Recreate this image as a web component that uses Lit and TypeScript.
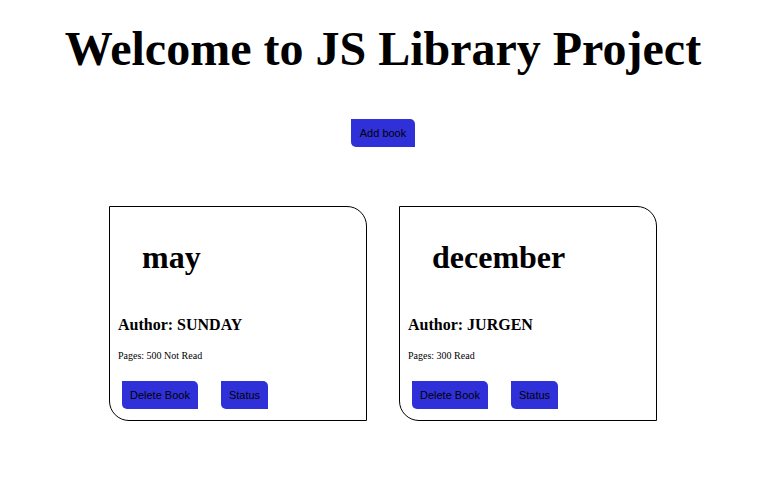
import { LitElement, html, css } from "lit";
import { customElement, property, state } from "lit/decorators.js";

interface Book {
  title: string;
  author: string;
  pages: number;
  read: boolean;
}

const buttonStyles = css`
  button {
    margin: 0;
    padding: 8px;
    border: 0;
    border-radius: 0 5px;
    background: #3030d8;
    color: #000;
    font: 11px/12px "Liberation Sans", Arial, sans-serif;
    cursor: pointer;
  }
`;

@customElement("book-card")
export class BookCard extends LitElement {
  @property({ attribute: false }) book!: Book;

  static styles = [
    buttonStyles,
    css`
      :host {
        display: block;
        box-sizing: border-box;
        padding: 32px 8px 11px;
        border: 1px solid #000;
        border-radius: 0 20px;
      }
      .title {
        margin: 0 24px;
        font-size: 32px;
        line-height: 37px;
      }
      .author {
        margin: 40px 0 0;
        font-size: 16px;
        line-height: 18px;
      }
      .pages {
        margin: 16px 0 0;
        font-size: 10px;
        line-height: 12px;
      }
      .actions {
        display: flex;
        gap: 23px;
        margin: 19px 0 0 4px;
      }
    `,
  ];

  private emit(name: string) {
    this.dispatchEvent(new CustomEvent(name));
  }

  render() {
    const { title, author, pages, read } = this.book;
    return html`
      <h1 class="title">${title}</h1>
      <h2 class="author">Author: ${author}</h2>
      <p class="pages">Pages: ${pages} ${read ? "Read" : "Not Read"}</p>
      <div class="actions">
        <button type="button" @click=${() => this.emit("book-delete")}>Delete Book</button>
        <button type="button" @click=${() => this.emit("book-toggle")}>Status</button>
      </div>
    `;
  }
}

@customElement("app-root")
export class AppRoot extends LitElement {
  @state() private books: Book[] = [
    { title: "may", author: "SUNDAY", pages: 500, read: false },
    { title: "december", author: "JURGEN", pages: 300, read: true },
  ];

  static styles = [
    buttonStyles,
    css`
      :host {
        display: block;
        padding: 21px 2px 40px 0;
        background: #fff;
        color: #000;
        font-family: "Liberation Serif", "Times New Roman", serif;
      }
      .heading {
        margin: 0;
        font-size: 48px;
        line-height: 56px;
        text-align: center;
      }
      .toolbar {
        display: flex;
        justify-content: center;
        margin: 42px 0 59px;
      }
      .toolbar button {
        min-width: 64px;
      }
      .books {
        display: grid;
        grid-template-columns: repeat(auto-fit, 258px);
        justify-content: center;
        gap: 32px;
      }
    `,
  ];

  private addBook() {
    this.books = [...this.books, { title: "untitled", author: "UNKNOWN", pages: 0, read: false }];
  }

  private deleteBook(book: Book) {
    this.books = this.books.filter((b) => b !== book);
  }

  private toggleBook(book: Book) {
    this.books = this.books.map((b) => (b === book ? { ...b, read: !b.read } : b));
  }

  render() {
    return html`
      <h1 class="heading">Welcome to JS Library Project</h1>
      <div class="toolbar">
        <button type="button" @click=${this.addBook}>Add book</button>
      </div>
      <main class="books">
        ${this.books.map(
          (book) => html`<book-card
            .book=${book}
            @book-delete=${() => this.deleteBook(book)}
            @book-toggle=${() => this.toggleBook(book)}
          ></book-card>`,
        )}
      </main>
    `;
  }
}
